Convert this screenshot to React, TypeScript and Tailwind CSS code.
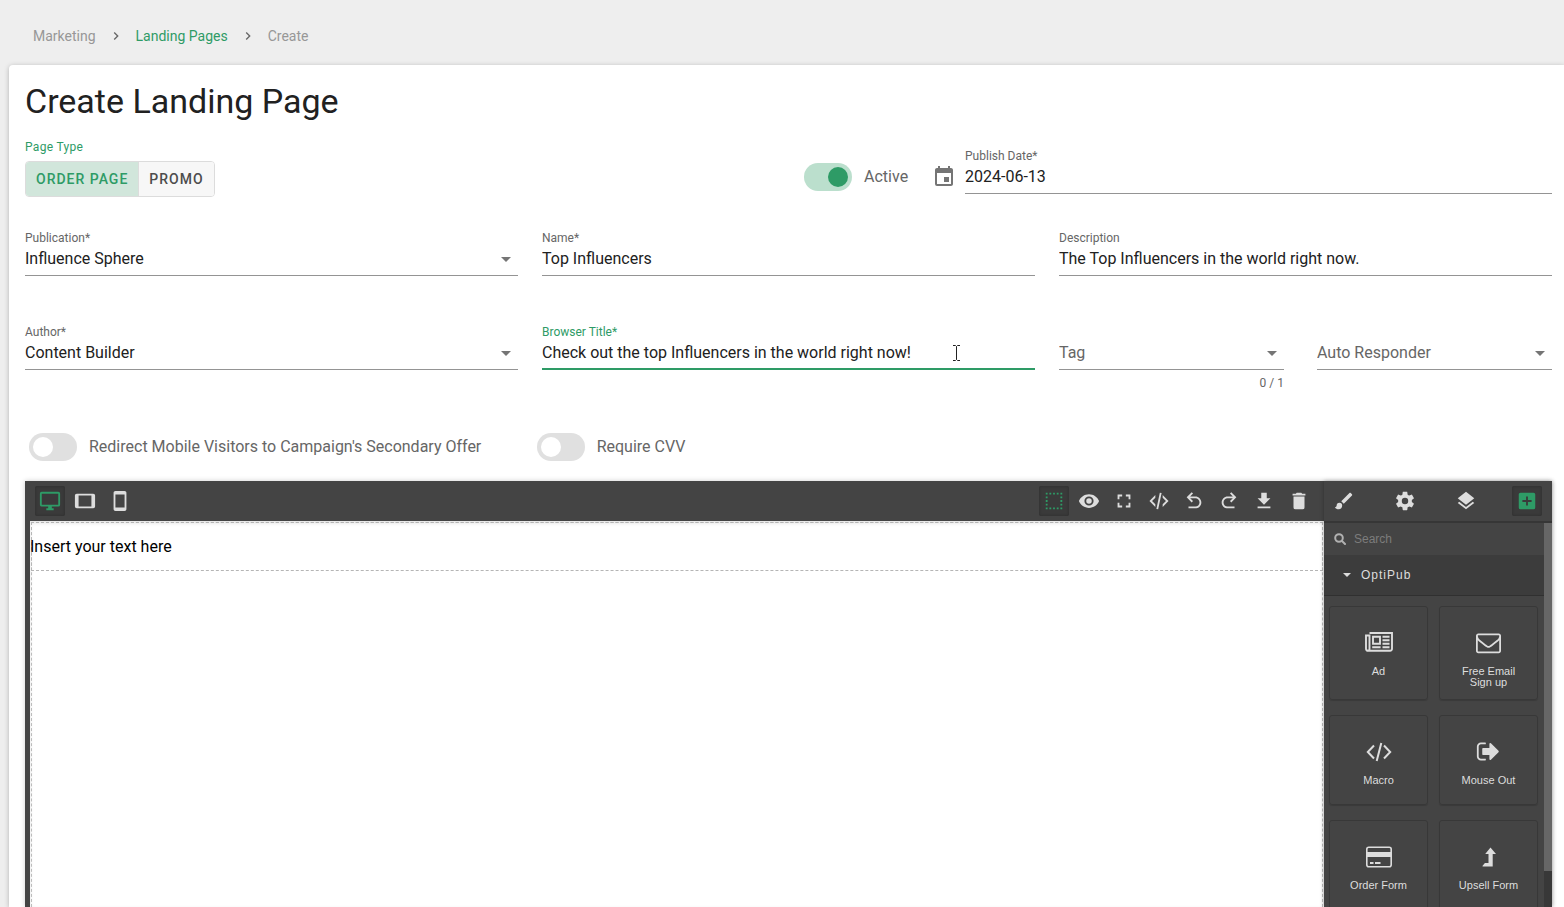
import React, { useState } from 'react';
import clsx from 'clsx';
import { MdChevronRight, MdEvent } from 'react-icons/md';

const ICONS = {
  desktop:
    'M21,16H3V4H21M21,2H3C1.89,2 1,2.89 1,4V16A2,2 0 0,0 3,18H10V20H8V22H16V20H14V18H21A2,2 0 0,0 23,16V4C23,2.89 22.1,2 21,2Z',
  tablet: 'M19,18H5V6H19M21,4H3C1.89,4 1,4.89 1,6V18A2,2 0 0,0 3,20H21A2,2 0 0,0 23,18V6C23,4.89 22.1,4 21,4Z',
  mobile: 'M17,19H7V5H17M17,1H7C5.89,1 5,1.89 5,3V21A2,2 0 0,0 7,23H17A2,2 0 0,0 19,21V3C19,1.89 18.1,1 17,1Z',
  borders:
    'M15,5H17V3H15M15,21H17V19H15M11,5H13V3H11M19,5H21V3H19M19,9H21V7H19M19,21H21V19H19M19,13H21V11H19M19,17H21V15H19M3,5H5V3H3M3,9H5V7H3M3,13H5V11H3M3,17H5V15H3M3,21H5V19H3M11,21H13V19H11M7,21H9V19H7M7,5H9V3H7V5Z',
  eye: 'M12,9A3,3 0 0,0 9,12A3,3 0 0,0 12,15A3,3 0 0,0 15,12A3,3 0 0,0 12,9M12,17A5,5 0 0,1 7,12A5,5 0 0,1 12,7A5,5 0 0,1 17,12A5,5 0 0,1 12,17M12,4.5C7,4.5 2.73,7.61 1,12C2.73,16.39 7,19.5 12,19.5C17,19.5 21.27,16.39 23,12C21.27,7.61 17,4.5 12,4.5Z',
  fullscreen: 'M5,5H10V7H7V10H5V5M14,5H19V10H17V7H14V5M17,14H19V19H14V17H17V14M10,17V19H5V14H7V17H10Z',
  code: 'M12.89,3L14.85,3.4L11.11,21L9.15,20.6L12.89,3M19.59,12L16,8.41V5.58L22.42,12L16,18.41V15.58L19.59,12M1.58,12L8,5.58V8.41L4.41,12L8,15.58V18.41L1.58,12Z',
  undo: 'M20 13.5C20 17.09 17.09 20 13.5 20H6V18H13.5C16 18 18 16 18 13.5S16 9 13.5 9H7.83L10.91 12.09L9.5 13.5L4 8L9.5 2.5L10.92 3.91L7.83 7H13.5C17.09 7 20 9.91 20 13.5Z',
  redo: 'M10.5 18H18V20H10.5C6.91 20 4 17.09 4 13.5S6.91 7 10.5 7H16.17L13.08 3.91L14.5 2.5L20 8L14.5 13.5L13.09 12.09L16.17 9H10.5C8 9 6 11 6 13.5S8 18 10.5 18Z',
  download: 'M5,20H19V18H5M19,9H15V3H9V9H5L12,16L19,9Z',
  trash: 'M19,4H15.5L14.5,3H9.5L8.5,4H5V6H19M6,19A2,2 0 0,0 8,21H16A2,2 0 0,0 18,19V7H6V19Z',
  brush:
    'M20.71,4.63L19.37,3.29C19,2.9 18.35,2.9 17.96,3.29L9,12.25L11.75,15L20.71,6.04C21.1,5.65 21.1,5 20.71,4.63M7,14A3,3 0 0,0 4,17C4,18.31 2.84,19 2,19C2.92,20.22 4.5,21 6,21A4,4 0 0,0 10,17A3,3 0 0,0 7,14Z',
  settings:
    'M12,15.5A3.5,3.5 0 0,1 8.5,12A3.5,3.5 0 0,1 12,8.5A3.5,3.5 0 0,1 15.5,12A3.5,3.5 0 0,1 12,15.5M19.43,12.97C19.47,12.65 19.5,12.33 19.5,12C19.5,11.67 19.47,11.34 19.43,11L21.54,9.37C21.73,9.22 21.78,8.95 21.66,8.73L19.66,5.27C19.54,5.05 19.27,4.96 19.05,5.05L16.56,6.05C16.04,5.66 15.5,5.32 14.87,5.07L14.5,2.42C14.46,2.18 14.25,2 14,2H10C9.75,2 9.54,2.18 9.5,2.42L9.13,5.07C8.5,5.32 7.96,5.66 7.44,6.05L4.95,5.05C4.73,4.96 4.46,5.05 4.34,5.27L2.34,8.73C2.21,8.95 2.27,9.22 2.46,9.37L4.57,11C4.53,11.34 4.5,11.67 4.5,12C4.5,12.33 4.53,12.65 4.57,12.97L2.46,14.63C2.27,14.78 2.21,15.05 2.34,15.27L4.34,18.73C4.46,18.95 4.73,19.03 4.95,18.95L7.44,17.94C7.96,18.34 8.5,18.68 9.13,18.93L9.5,21.58C9.54,21.82 9.75,22 10,22H14C14.25,22 14.46,21.82 14.5,21.58L14.87,18.93C15.5,18.67 16.04,18.34 16.56,17.94L19.05,18.95C19.27,19.03 19.54,18.95 19.66,18.73L21.66,15.27C21.78,15.05 21.73,14.78 21.54,14.63L19.43,12.97Z',
  layers: 'M12,16L19.36,10.27L21,9L12,2L3,9L4.63,10.27M12,18.54L4.62,12.81L3,14.07L12,21.07L21,14.07L19.37,12.8L12,18.54Z',
  plus: 'M17,13H13V17H11V13H7V11H11V7H13V11H17M19,3H5C3.89,3 3,3.89 3,5V19A2,2 0 0,0 5,21H19A2,2 0 0,0 21,19V5C21,3.89 20.1,3 19,3Z',
};

type IconName = keyof typeof ICONS;

const DEVICES: IconName[] = ['desktop', 'tablet', 'mobile'];
const ACTIONS: IconName[] = ['borders', 'eye', 'fullscreen', 'code', 'undo', 'redo', 'download', 'trash'];
const VIEWS: IconName[] = ['brush', 'settings', 'layers', 'plus'];

function ToolButton({ icon, active, onClick }: { icon: IconName; active?: boolean; onClick?: () => void }) {
  return (
    <button
      type="button"
      aria-label={icon}
      onClick={onClick}
      className={clsx(
        'flex size-[30px] cursor-pointer items-center justify-center rounded-xs',
        active ? 'bg-[#3a3a3a] text-[#2e9b66] shadow-[inset_0_0_3px_rgba(0,0,0,0.25)]' : 'text-[#dddddd]'
      )}
    >
      <svg viewBox="0 0 24 24" className="size-[22px]" fill="currentColor">
        <path d={ICONS[icon]} />
      </svg>
    </button>
  );
}

function Caret() {
  return (
    <svg viewBox="0 0 24 24" className="pointer-events-none absolute right-0 bottom-[5px] size-6 text-[#757575]" fill="currentColor">
      <path d="M7,10L12,15L17,10H7Z" />
    </svg>
  );
}

function TextField({ id, label, value, focused }: { id: string; label: string; value: string; focused?: boolean }) {
  return (
    <div className="relative flex h-[46px] flex-1 flex-col">
      <label htmlFor={id} className={clsx('text-xs leading-4', focused ? 'text-[#2e9b66]' : 'text-[#666666]')}>
        {label}
      </label>
      <input
        id={id}
        defaultValue={value}
        className={clsx(
          'h-[30px] w-full text-base leading-6 text-[#212121] outline-none',
          focused ? 'border-b-2 border-[#2e9b66] pb-[3px]' : 'border-b border-[#949494] pb-1'
        )}
      />
      {focused && (
        <svg viewBox="0 0 9 18" className="absolute top-5 left-[410px] h-[18px] w-[9px]" fill="none">
          <path d="M1 1.5H3.5L4.5 2.5L5.5 1.5H8M4.5 2.5V15.5M1 16.5H3.5L4.5 15.5L5.5 16.5H8" stroke="#fff" strokeWidth="3" />
          <path d="M1 1.5H3.5L4.5 2.5L5.5 1.5H8M4.5 2.5V15.5M1 16.5H3.5L4.5 15.5L5.5 16.5H8" stroke="#222" />
        </svg>
      )}
    </div>
  );
}

function SelectField({ id, label, value }: { id: string; label: string; value?: string }) {
  return (
    <div className="relative flex h-[46px] flex-col justify-end">
      {value && (
        <label htmlFor={id} className="text-xs leading-4 text-[#666666]">
          {label}
        </label>
      )}
      <select
        id={id}
        aria-label={label}
        className={clsx(
          'h-[30px] w-full appearance-none border-b border-[#949494] pt-px pb-1 text-base leading-6 outline-none',
          value ? 'text-[#212121]' : 'text-[#666666]'
        )}
      >
        <option>{value ?? label}</option>
      </select>
      <Caret />
    </div>
  );
}

function Switch({ label, checked }: { label: string; checked?: boolean }) {
  return (
    <label className="flex cursor-pointer items-center gap-3 text-base leading-6 text-[#666666]">
      <input
        type="checkbox"
        defaultChecked={checked}
        className="h-7 w-12 shrink-0 cursor-pointer appearance-none rounded-full bg-[#e0e0e0] p-1 before:block before:size-5 before:rounded-full before:bg-white checked:bg-[#bbdfcd] checked:before:ml-5 checked:before:bg-[#2e9b66]"
      />
      {label}
    </label>
  );
}

const BLOCKS: { name: string; icon: React.ReactNode }[] = [
  {
    name: 'Ad',
    icon: (
      <svg viewBox="0 0 28 20" className="mb-0.5 h-5 w-7" fill="none" stroke="currentColor" strokeWidth="1.9">
        <path d="M4.5 1H27V16.5A2 2 0 0 1 25 18.800H3A2 2 0 0 1 1 16.800V3.500H4.500V16.800A1.800 1.800 0 0 1 2.800 18.800" />
        <path d="M8 4.800H15V11.800H8ZM17.500 4.800H24.500M17.500 8.200H24.500M17.500 11.800H24.500M7.200 15.200H15.600M17.500 15.200H24.500" />
      </svg>
    ),
  },
  {
    name: 'Free Email Sign up',
    icon: (
      <svg viewBox="0 0 1792 1792" className="size-[25px]" fill="currentColor">
        <path d="M1664 1504v-768q-32 36-69 66-268 206-426 338-51 43-83 67t-86.5 48.5-102.5 24.5h-2q-48 0-102.5-24.5t-86.5-48.5-83-67q-158-132-426-338-37-30-69-66v768q0 13 9.5 22.5t22.5 9.5h1472q13 0 22.5-9.5t9.5-22.5zm0-1051v-24.5l-.5-13-3-12.5-5.5-9-9-7.5-14-2.5h-1472q-13 0-22.5 9.5t-9.5 22.5q0 168 147 284 193 152 401 317 6 5 35 29.5t46 37.5 44.5 31.5 50.5 27.5 43 9h2q20 0 43-9t50.5-27.5 44.5-31.5 46-37.5 35-29.5q208-165 401-317 54-43 100.5-115.5t46.5-131.5zm128-37v1088q0 66-47 113t-113 47h-1472q-66 0-113-47t-47-113v-1088q0-66 47-113t113-47h1472q66 0 113 47t47 113z" />
      </svg>
    ),
  },
  {
    name: 'Macro',
    icon: (
      <svg viewBox="0 0 26 20" className="h-5 w-[26px]" fill="none" stroke="currentColor" strokeWidth="2">
        <path d="M8 3.5L1.8 10L8 16.5M18 3.5L24.2 10L18 16.5M15.3 1L10.7 19" />
      </svg>
    ),
  },
  {
    name: 'Mouse Out',
    icon: (
      <svg viewBox="0 0 1792 1792" className="size-[25px]" fill="currentColor">
        <path d="M704 1440q0 4 1 20t.5 26.5-3 23.5-10 19.5-20.5 6.5h-320q-119 0-203.5-84.5t-84.5-203.5v-704q0-119 84.5-203.5t203.5-84.5h320q13 0 22.5 9.5t9.5 22.5q0 4 1 20t.5 26.5-3 23.5-10 19.5-20.5 6.5h-320q-66 0-113 47t-47 113v704q0 66 47 113t113 47h312l11.5 1 11.5 3 8 5.5 7 9 2 13.5zm928-544q0 26-19 45l-544 544q-19 19-45 19t-45-19-19-45v-288h-448q-26 0-45-19t-19-45v-384q0-26 19-45t45-19h448v-288q0-26 19-45t45-19 45 19l544 544q19 19 19 45z" />
      </svg>
    ),
  },
  {
    name: 'Order Form',
    icon: (
      <svg viewBox="0 0 26 22" className="h-[22px] w-[26px]" fill="currentColor">
        <rect x="0.8" y="1.3" width="24.4" height="19.4" rx="2" fill="none" stroke="currentColor" strokeWidth="1.6" />
        <path d="M1 6H25V11H1ZM4 16H7.500V18H4ZM9 16H14.500V18H9Z" />
      </svg>
    ),
  },
  {
    name: 'Upsell Form',
    icon: (
      <svg viewBox="0 0 14 20" className="h-5 w-3.5" fill="currentColor">
        <path d="M8.500 0.500L14 7H10.700V19.500H0.700L0.400 18.900L2.900 16H6.500V7H3.200Z" />
      </svg>
    ),
  },
];

export default function App() {
  const [pageType, setPageType] = useState('Order Page');
  const [device, setDevice] = useState<IconName>('desktop');
  const [view, setView] = useState<IconName>('plus');

  return (
    <div className="flex h-screen flex-col overflow-hidden bg-[#eeeeee] font-[Roboto,sans-serif]">
      <nav className="flex h-[65px] shrink-0 items-center gap-3 pt-1.5 pl-[33px] text-sm leading-5 text-[#979797]">
        <span>Marketing</span>
        <MdChevronRight className="size-4 text-[#666666]" />
        <a href="#landing-pages" className="text-[#2e9b66]">
          Landing Pages
        </a>
        <MdChevronRight className="size-4 text-[#666666]" />
        <span>Create</span>
      </nav>

      <main className="ml-[9px] flex min-h-0 flex-1 flex-col rounded-tl bg-white pt-4 pr-3 pl-4 shadow-[0_1px_5px_rgba(0,0,0,0.25)]">
        <h1 className="text-[34px] leading-10 text-[#212121]">Create Landing Page</h1>

        <div className="mt-4 flex">
          <div className="flex-1">
            <div className="text-xs leading-5 tracking-wide text-[#2e9b66]">Page Type</div>
            <div className="mt-1 inline-flex h-9 overflow-hidden rounded border border-[#dcdcdc]">
              {['Order Page', 'Promo'].map((type) => (
                <button
                  key={type}
                  type="button"
                  onClick={() => setPageType(type)}
                  className={clsx(
                    'cursor-pointer border-r border-[#dcdcdc] px-[10px] text-sm font-medium tracking-[1px] uppercase last:border-r-0',
                    pageType === type ? 'bg-[#d1e6db] text-[#2e9b66]' : 'bg-[#f7f7f7] text-[#4d4d4d]'
                  )}
                >
                  {type}
                </button>
              ))}
            </div>
          </div>
          <div className="mt-[11px] flex h-[46px] w-32 items-end">
            <div className="flex h-[34px] items-center">
              <Switch label="Active" checked />
            </div>
          </div>
          <div className="mt-[11px] flex h-[46px] w-[40.6%] items-end gap-[9px]">
            <div className="flex h-[34px] items-center">
              <MdEvent className="size-6 text-[#757575]" />
            </div>
            <TextField id="publish-date" label="Publish Date*" value="2024-06-13" />
          </div>
        </div>

        <div className="mt-[33px] grid grid-cols-3 gap-x-6 gap-y-12">
          <SelectField id="publication" label="Publication*" value="Influence Sphere" />
          <TextField id="name" label="Name*" value="Top Influencers" />
          <TextField id="description" label="Description" value="The Top Influencers in the world right now." />
          <SelectField id="author" label="Author*" value="Content Builder" />
          <TextField id="browser-title" label="Browser Title*" value="Check out the top Influencers in the world right now!" focused />
          <div className="grid grid-cols-[225fr_235fr] gap-x-[33px]">
            <div>
              <SelectField id="tag" label="Tag" />
              <div className="mt-[5px] text-right text-xs leading-4 text-[#666666]">0 / 1</div>
            </div>
            <SelectField id="auto-responder" label="Auto Responder" />
          </div>
        </div>

        <div className="mt-[42px] grid grid-cols-3 pl-1">
          <Switch label="Redirect Mobile Visitors to Campaign's Secondary Offer" />
          <Switch label="Require CVV" />
        </div>

        <div className="mt-5 flex min-h-0 flex-1 bg-[#444444] pl-[5px] shadow-[0_0_5px_rgba(0,0,0,0.2)]">
          {/* Canvas */}
          <section className="flex min-w-0 flex-1 flex-col">
            <div className="flex h-10 shrink-0 items-center justify-between pr-[10px] pl-[5px]">
              <div className="flex gap-[5px]">
                {DEVICES.map((d) => (
                  <ToolButton key={d} icon={d} active={d === device} onClick={() => setDevice(d)} />
                ))}
              </div>
              <div className="flex gap-[5px]">
                {ACTIONS.map((a) => (
                  <ToolButton key={a} icon={a} active={a === 'borders'} />
                ))}
              </div>
            </div>
            <div className="flex-1 bg-white pt-px pr-px pl-px shadow-[inset_0_2px_4px_rgba(0,0,0,0.12)]">
              <div className="h-full border border-b-0 border-dashed border-[#bbbbbb]">
                <div className="-mt-px -mr-px -ml-px h-[49px] border border-dashed border-[#b5b5b5]">
                  <p className="-ml-0.5 text-base leading-[47px] text-black">Insert your text here</p>
                </div>
              </div>
            </div>
          </section>

          {/* Blocks panel */}
          <aside className="flex w-[228px] shrink-0 flex-col font-[Liberation_Sans,Arial,sans-serif] text-[#dddddd] shadow-[0_0_4px_rgba(0,0,0,0.3)]">
            <div className="flex h-[42px] shrink-0 items-center justify-between border-b-2 border-[#363636] pr-[10px] pl-[5px]">
              {VIEWS.map((v) => (
                <ToolButton key={v} icon={v} active={v === view} onClick={() => setView(v)} />
              ))}
            </div>
            <div className="flex min-h-0 flex-1">
              <div className="min-w-0 flex-1 overflow-hidden">
                <div className="flex h-8 items-center gap-2 pl-[10px]">
                  <svg viewBox="0 0 12 12" className="size-3 text-[#b0b0b0]" fill="none" stroke="currentColor" strokeWidth="2">
                    <circle cx="5" cy="5" r="3.800" />
                    <path d="M8 8L11 11" strokeLinecap="round" />
                  </svg>
                  <input
                    type="search"
                    aria-label="Search"
                    placeholder="Search"
                    className="min-w-0 flex-1 text-xs outline-none placeholder:text-[#7c7c7c]"
                  />
                </div>
                <button
                  type="button"
                  className="flex h-[41px] w-full items-center gap-[10px] border-b border-[#303030] bg-[#3c3c3c] pl-[19px] text-xs tracking-[1px]"
                >
                  <svg viewBox="0 0 8 4" className="h-1 w-2" fill="currentColor">
                    <path d="M0 0H8L4 4Z" />
                  </svg>
                  OptiPub
                </button>
                <div className="grid grid-cols-2 gap-x-[11px] gap-y-[15px] py-[10px] pr-1.5 pl-[5px]">
                  {BLOCKS.map((block) => (
                    <div
                      key={block.name}
                      className="flex min-h-[90px] flex-col items-center rounded-[3px] border border-[#383838] px-4 pt-[22px] pb-[11px] text-center text-[11px] leading-[11px] shadow-[0_1px_1px_rgba(0,0,0,0.15)]"
                    >
                      <div className="mb-2.5 flex h-[27px] items-center">{block.icon}</div>
                      <span className="block max-w-16">{block.name}</span>
                    </div>
                  ))}
                </div>
              </div>
              <div className="w-2 shrink-0 bg-[#383838]">
                <div className="h-[90.5%] bg-[#666666]" />
              </div>
            </div>
          </aside>
        </div>
      </main>
    </div>
  );
}
